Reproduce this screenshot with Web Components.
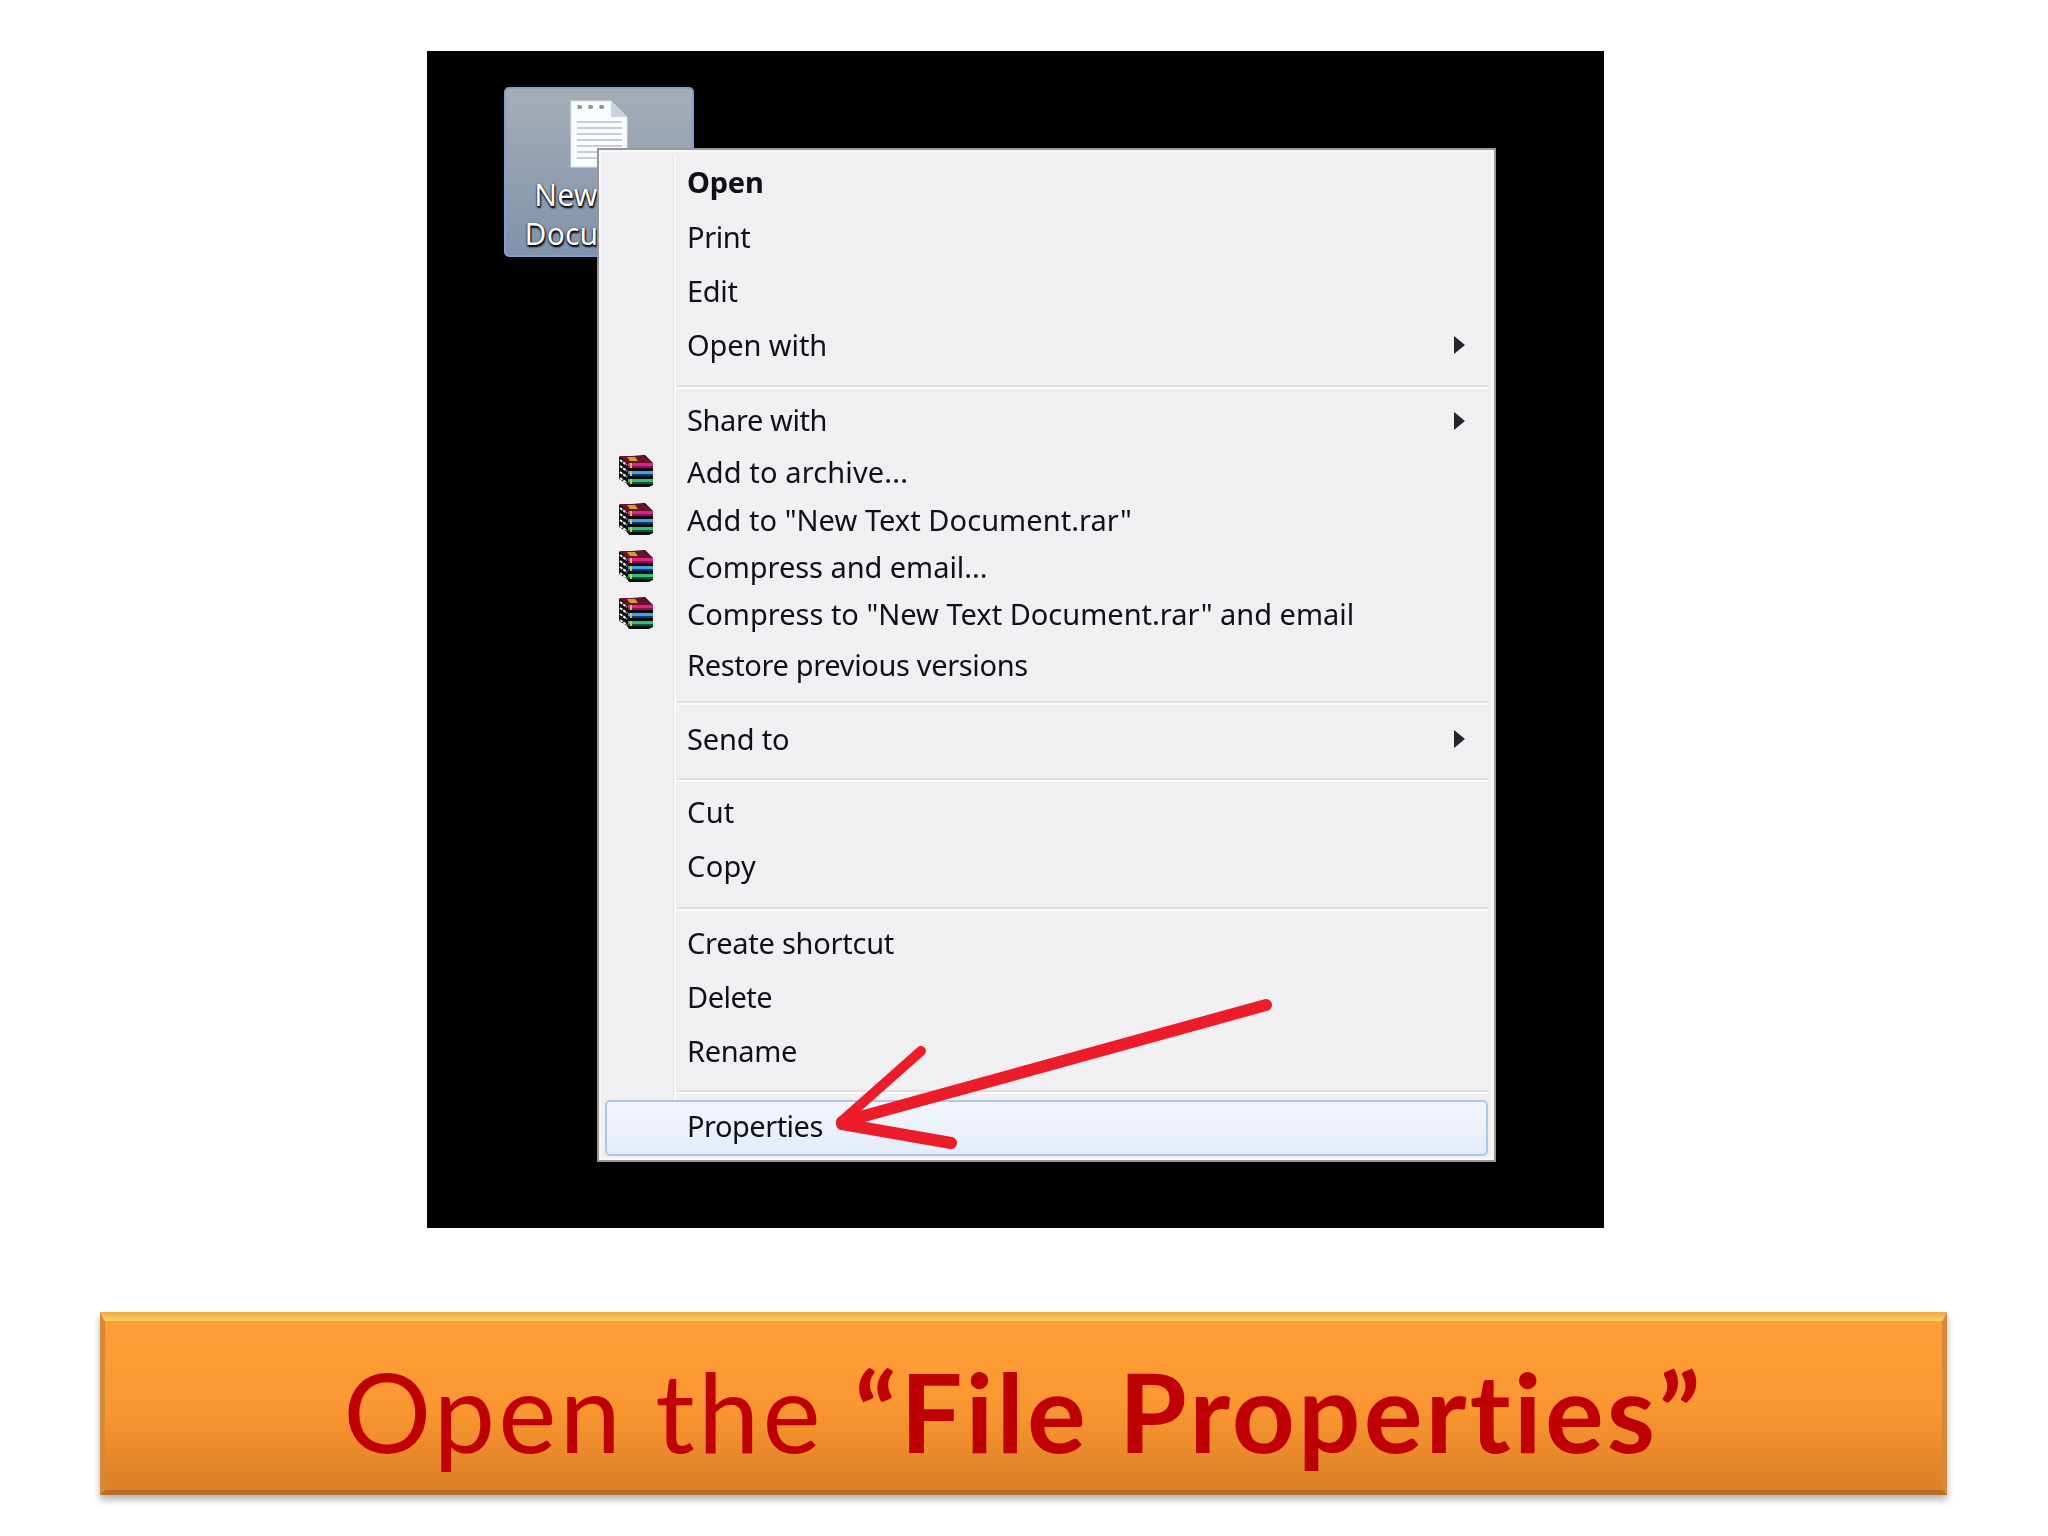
<!DOCTYPE html>
<html>
<head>
<meta charset="utf-8">
<title>Open the File Properties</title>
<style>
    html, body { margin: 0; background: #fff; }
    body { width: 2048px; height: 1536px; overflow: hidden; }
</style>
</head>
<body>
<slide-page>
    <desktop-shot slot="shot">
        <file-icon></file-icon>
        <context-menu>
            <menu-item h="54" bold style="letter-spacing:-0.2px">Open</menu-item>
            <menu-item h="54" style="letter-spacing:-0.4px">Print</menu-item>
            <menu-item h="54" style="letter-spacing:-0.3px">Edit</menu-item>
            <menu-item h="54" arrow style="letter-spacing:-0.1px">Open with</menu-item>
            <menu-sep h="21" style="padding-top:8px"></menu-sep>
            <menu-item h="55" arrow style="letter-spacing:-0.4px">Share with</menu-item>
            <menu-item h="49" rar style="letter-spacing:0.14px">Add to archive...</menu-item>
            <menu-item h="47" rar style="letter-spacing:0.05px">Add to "New Text Document.rar"</menu-item>
            <menu-item h="47" rar style="letter-spacing:-0.05px">Compress and email...</menu-item>
            <menu-item h="47" rar style="letter-spacing:0">Compress to "New Text Document.rar" and email</menu-item>
            <menu-item h="54" style="letter-spacing:-0.35px">Restore previous versions</menu-item>
            <menu-sep h="20" style="padding-top:2px"></menu-sep>
            <menu-item h="54" arrow style="letter-spacing:-0.18px">Send to</menu-item>
            <menu-sep h="19" style="padding-top:8px"></menu-sep>
            <menu-item h="54" style="letter-spacing:0.3px">Cut</menu-item>
            <menu-item h="55" style="letter-spacing:0.3px">Copy</menu-item>
            <menu-sep h="22" style="padding-top:8px"></menu-sep>
            <menu-item h="54" style="letter-spacing:-0.25px">Create shortcut</menu-item>
            <menu-item h="54" style="letter-spacing:-0.5px">Delete</menu-item>
            <menu-item h="54" style="letter-spacing:-0.35px">Rename</menu-item>
            <menu-sep h="22" style="padding-top:6px"></menu-sep>
            <menu-item h="56" active style="letter-spacing:-0.5px">Properties</menu-item>
        </context-menu>
        <red-arrow></red-arrow>
    </desktop-shot>
    <title-banner slot="banner">Open the <b>“File Properties”</b></title-banner>
</slide-page>

<script>
class SlidePage extends HTMLElement {
    constructor() {
        super();
        this.attachShadow({ mode: "open" }).innerHTML = `
            <style>
                :host {
                    display: flex;
                    flex-direction: column;
                    width: 2048px;
                    height: 1536px;
                    padding-top: 51px;
                    box-sizing: border-box;
                    background: #fff;
                }
                .shot { display: block; margin-left: 427px; }
                .banner { display: block; margin: 84px 0 0 100px; }
            </style>
            <div class="shot"><slot name="shot"></slot></div>
            <div class="banner"><slot name="banner"></slot></div>
        `;
    }
}

class DesktopShot extends HTMLElement {
    constructor() {
        super();
        this.attachShadow({ mode: "open" }).innerHTML = `
            <style>
                :host {
                    display: block;
                    position: relative;
                    width: 1177px;
                    height: 1177px;
                    background: #000;
                    overflow: hidden;
                }
            </style>
            <slot></slot>
        `;
    }
}

class FileIcon extends HTMLElement {
    constructor() {
        super();
        this.attachShadow({ mode: "open" }).innerHTML = `
            <style>
                :host {
                    display: block;
                    position: absolute;
                    left: 77px;
                    top: 36px;
                    width: 190px;
                    height: 170px;
                    box-sizing: border-box;
                    border: 2px solid #7da2ce;
                    border-radius: 5px;
                    background: linear-gradient(#a6adb6, #7f93ad);
                    text-align: center;
                    font: 30px/39px "Noto Sans", sans-serif;
                    color: #fff;
                    text-shadow: 0 1px 2px #000, 1px 2px 2px #000, 0 0 1px #222;
                }
                svg { display: block; margin: 11px auto 0; }
                .label { margin-top: 7px; letter-spacing: 0.2px; }
            </style>
            <svg width="58" height="68" viewBox="0 0 58 68">
                <path d="M1 1H41L57 17V67H1Z" fill="#fafbfd" stroke="#dfe3e9"/>
                <path d="M41 1V17H57Z" fill="#c9d2de"/>
                <path d="M7 22H52M7 28H52M7 34H52M7 40H52M7 46H52M7 52H52M7 58H52" stroke="#c3cedb" stroke-width="2"/>
                <path d="M9 7h3M9 5v4M20 7h3M20 5v4M31 7h3M31 5v4" stroke="#8d96a3" stroke-width="3"/>
            </svg>
            <div class="label">New Text<br>Document</div>
        `;
    }
}

class ContextMenu extends HTMLElement {
    constructor() {
        super();
        this.attachShadow({ mode: "open" }).innerHTML = `
            <style>
                :host {
                    display: block;
                    position: absolute;
                    left: 170px;
                    top: 97px;
                    width: 899px;
                    box-sizing: border-box;
                    padding: 6px 6px 4px 6px;
                    border: 2px solid #979797;
                    box-shadow: inset 0 0 0 2px #f8f8f8;
                    background: #f0eff1;
                    font: 29px "Noto Sans", "Open Sans", sans-serif;
                    color: #101018;
                }
                .rail {
                    position: absolute;
                    left: 74px;
                    top: 6px;
                    bottom: 4px;
                    width: 3px;
                    background: linear-gradient(90deg, #e4e4e5 0 1px, #fbfbfb 1px);
                }
            </style>
            <div class="rail"></div>
            <slot></slot>
        `;
    }
}

class MenuItem extends HTMLElement {
    constructor() {
        super();
        this.attachShadow({ mode: "open" }).innerHTML = `
            <style>
                :host {
                    display: flex;
                    align-items: center;
                    position: relative;
                    box-sizing: border-box;
                }
                :host([bold]) { font-weight: 700; }
                :host([bold]) .text { padding-bottom: 4px; }
                :host([active]) {
                    border: 2px solid #a9c9ec;
                    border-radius: 5px;
                    background: linear-gradient(#f3f6fb, #e4ecf8);
                }
                :host([active]) .text { padding-bottom: 5px; }
                .icon { width: 82px; flex: none; display: flex; padding-left: 14px; box-sizing: border-box; }
                :host([active]) .icon { width: 80px; }
                .text { flex: 1; padding-bottom: 2px; white-space: nowrap; filter: blur(0.35px); }
                .arrow { flex: none; margin-right: 23px; display: none; }
                :host([arrow]) .arrow { display: block; }
            </style>
            <div class="icon"></div>
            <div class="text"><slot></slot></div>
            <svg class="arrow" width="11" height="18" viewBox="0 0 11 18"><path d="M0 0L11 9L0 18Z" fill="#26262a"/></svg>
        `;
    }

    connectedCallback() {
        this.style.height = this.getAttribute("h") + "px";
        if (this.hasAttribute("rar")) {
            this.shadowRoot.querySelector(".icon").appendChild(document.createElement("rar-icon"));
        }
    }
}

class MenuSep extends HTMLElement {
    constructor() {
        super();
        this.attachShadow({ mode: "open" }).innerHTML = `
            <style>
                :host { display: flex; align-items: center; box-sizing: border-box; padding-left: 72px; }
                div { flex: 1; height: 4px; background: linear-gradient(#dfdfe0 0 2px, #fbfbfb 2px); }
            </style>
            <div></div>
        `;
    }

    connectedCallback() {
        this.style.height = this.getAttribute("h") + "px";
    }
}

class RarIcon extends HTMLElement {
    constructor() {
        super();
        this.attachShadow({ mode: "open" }).innerHTML = `
            <style>:host { display: block; width: 35px; height: 32px; margin-top: -3px; } svg { display: block; }</style>
            <svg width="35" height="32" viewBox="0 0 35 32">
                <path d="M0 2L26 0L34 8V30L30 32H10L8 29L0 24Z" fill="#0d0d10"/>
                <path d="M0 1H25L34 8H8Z" fill="#6e0f2c"/>
                <path d="M8 2H16L19 6H11Z" fill="#c9a227"/>
                <path d="M1 5L8 10M1 11L8 16M1 17L8 22M1 23L8 28" stroke="#f0f0f0" stroke-width="2" stroke-dasharray="3 1"/>
                <rect x="9" y="8" width="25" height="3" fill="#e0218a"/>
                <rect x="9" y="11" width="25" height="2" fill="#8c1350"/>
                <rect x="9" y="16" width="25" height="3" fill="#4a9fe0"/>
                <rect x="9" y="19" width="25" height="2" fill="#0b3a7a"/>
                <rect x="9" y="24" width="25" height="3" fill="#2fc070"/>
                <rect x="9" y="27" width="25" height="2" fill="#0a5a30"/>
                <path d="M11 8h2v5h-2zM11 16h2v5h-2zM11 24h2v5h-2z" fill="#d8c24a"/>
            </svg>
        `;
    }
}

class RedArrow extends HTMLElement {
    constructor() {
        super();
        this.attachShadow({ mode: "open" }).innerHTML = `
            <style>
                :host { display: block; position: absolute; left: 400px; top: 940px; width: 460px; height: 170px; }
                svg { display: block; }
            </style>
            <svg width="460" height="170" viewBox="0 0 460 170">
                <g transform="translate(-827 -991)" fill="none" stroke="#ed1c2b" stroke-linecap="round" stroke-linejoin="round">
                    <path d="M842 1122L1266 1005" stroke-width="12"/>
                    <path d="M921 1051L842 1121" stroke-width="10"/>
                    <path d="M842 1124L951 1143" stroke-width="12"/>
                </g>
            </svg>
        `;
    }
}

class TitleBanner extends HTMLElement {
    constructor() {
        super();
        this.attachShadow({ mode: "open" }).innerHTML = `
            <style>
                :host {
                    display: flex;
                    position: relative;
                    align-items: center;
                    justify-content: center;
                    width: 1847px;
                    height: 183px;
                    box-sizing: border-box;
                    padding-top: 8px;
                    border-style: solid;
                    border-width: 9px 5px 5px 5px;
                    border-color: transparent #d68a38 #b4702c #d68a38;
                    background: linear-gradient(#ff9e38 0%, #fb9732 50%, #dd7f28 100%);
                    box-shadow: 0 5px 7px rgba(90, 90, 90, 0.45);
                    font: 110px "Lato", sans-serif;
                    color: #c00000;
                    white-space: nowrap;
                    letter-spacing: 3.15px;
                }
                .bevel {
                    position: absolute;
                    left: -5px;
                    right: -5px;
                    top: -9px;
                    height: 9px;
                    background: linear-gradient(#f0a64a, #ffd25c);
                    clip-path: polygon(0 0, 100% 0, calc(100% - 5px) 100%, 5px 100%);
                }
                ::slotted(b) { margin-left: 0.28em; font-weight: 700; }
            </style>
            <div class="bevel"></div>
            <slot></slot>
        `;
    }
}

customElements.define("rar-icon", RarIcon);
customElements.define("menu-item", MenuItem);
customElements.define("menu-sep", MenuSep);
customElements.define("context-menu", ContextMenu);
customElements.define("file-icon", FileIcon);
customElements.define("red-arrow", RedArrow);
customElements.define("desktop-shot", DesktopShot);
customElements.define("title-banner", TitleBanner);
customElements.define("slide-page", SlidePage);
</script>
</body>
</html>
